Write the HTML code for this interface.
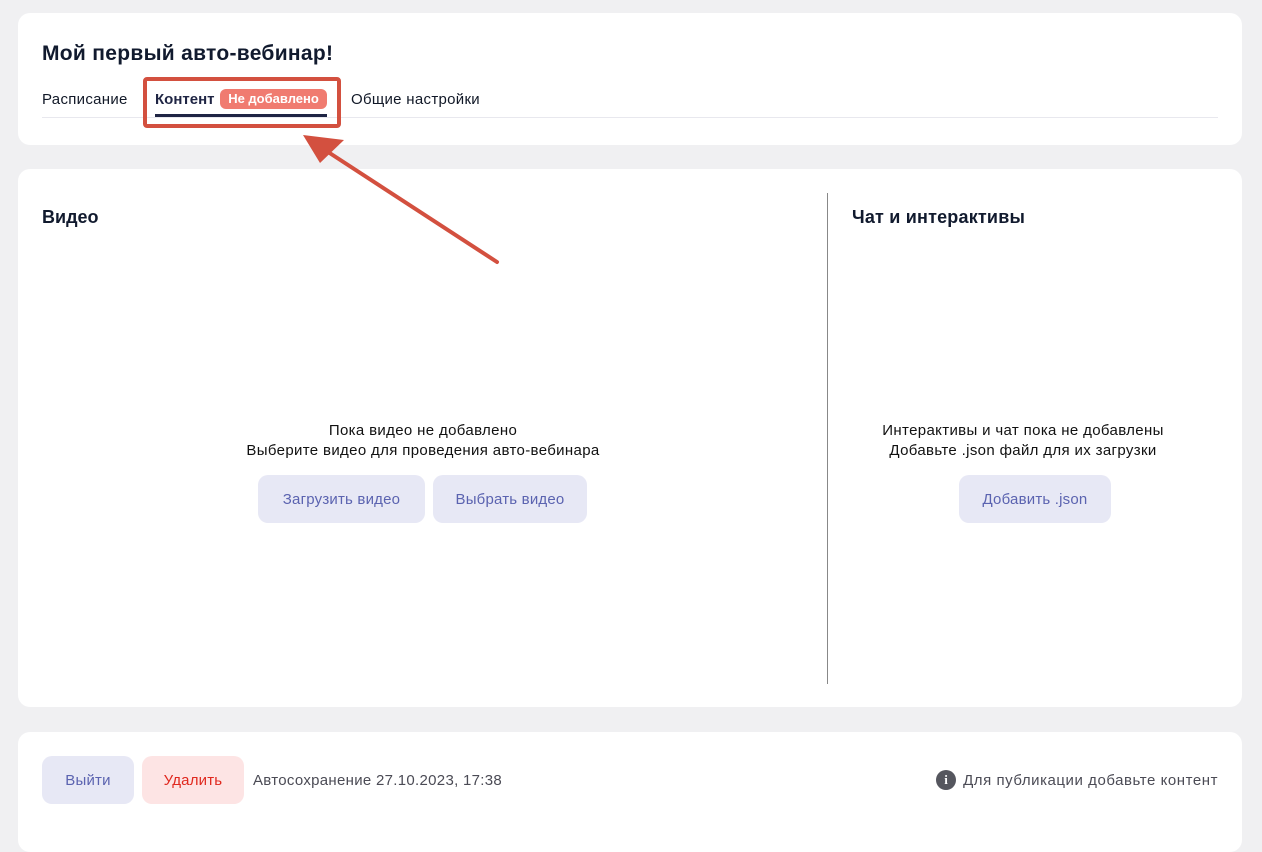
<!DOCTYPE html>
<html><head><meta charset="utf-8">
<style>
*{box-sizing:border-box;margin:0;padding:0}
body{width:1262px;height:822px;background:#f0f0f2;font-family:"Liberation Sans",sans-serif;color:#111827;position:relative;overflow:hidden}
.card{position:absolute;left:18px;width:1224px;background:#fff;border-radius:12px}
.abs{position:absolute}
.btn{position:absolute;border-radius:10px;background:#e7e8f5;color:#5b63b0;font-size:15px;display:flex;align-items:center;justify-content:center;letter-spacing:0.2px}
.c{text-align:center;font-size:15px;line-height:20px;color:#111;letter-spacing:0.35px;font-weight:500}
.t{font-size:15px;letter-spacing:0.3px}
</style></head><body>
<div class="card" style="top:13px;height:132px">
  <div class="abs" style="left:24px;top:29px;font-size:21px;font-weight:bold;color:#111a2e;letter-spacing:0.3px">Мой первый авто-вебинар!</div>
  <div class="abs t" style="left:24px;top:78px">Расписание</div>
  <div class="abs t" style="left:137px;top:78px;font-weight:bold;color:#1f2544;letter-spacing:0">Контент</div>
  <div class="abs" style="left:202px;top:76px;width:107px;height:20px;background:#f07b70;border-radius:6px;color:#fff;font-size:13px;font-weight:bold;text-align:center;line-height:20px">Не добавлено</div>
  <div class="abs t" style="left:333px;top:78px">Общие настройки</div>
  <div class="abs" style="left:24px;top:104px;width:1176px;height:1px;background:#e8e8ee"></div>
  <div class="abs" style="left:137px;top:101px;width:172px;height:3px;background:#1f2544"></div>
</div>
<div class="card" style="top:169px;height:538px">
  <div class="abs" style="left:24px;top:38px;font-size:18px;font-weight:bold;color:#111a2e">Видео</div>
  <div class="abs" style="left:834px;top:38px;font-size:18px;font-weight:bold;color:#111a2e;letter-spacing:0.2px">Чат и интерактивы</div>
  <div class="abs" style="left:809px;top:24px;width:1px;height:491px;background:#888"></div>
  <div class="abs c" style="left:105px;width:600px;top:252px">Пока видео не добавлено<br>Выберите видео для проведения авто-вебинара</div>
  <div class="btn" style="left:240px;top:306px;width:167px;height:48px">Загрузить видео</div>
  <div class="btn" style="left:415px;top:306px;width:154px;height:48px">Выбрать видео</div>
  <div class="abs c" style="left:755px;width:500px;top:252px">Интерактивы и чат пока не добавлены<br>Добавьте .json файл для их загрузки</div>
  <div class="btn" style="left:941px;top:306px;width:152px;height:48px">Добавить .json</div>
</div>
<div class="card" style="top:732px;height:120px">
  <div class="btn" style="left:24px;top:24px;width:92px;height:48px">Выйти</div>
  <div class="btn" style="left:124px;top:24px;width:102px;height:48px;background:#fde4e4;color:#e0281e">Удалить</div>
  <div class="abs t" style="left:235px;top:40px;color:#4b4b55">Автосохранение 27.10.2023, 17:38</div>
  <div class="abs" style="left:918px;top:38px;width:20px;height:20px;border-radius:50%;background:#55565e;color:#fff;font-size:13px;font-weight:bold;text-align:center;line-height:20px;font-family:'Liberation Serif',serif">i</div>
  <div class="abs t" style="right:24px;top:40px;color:#4b4b55;letter-spacing:0.55px">Для публикации добавьте контент</div>
</div>
<svg class="abs" style="left:0;top:0" width="1262" height="822">
  <rect x="145" y="79" width="194" height="47" fill="none" stroke="#d3503f" stroke-width="4" rx="2"/>
  <line x1="497" y1="262" x2="325" y2="150" stroke="#d3503f" stroke-width="4" stroke-linecap="round"/>
  <polygon points="303,135 344,140 320,163" fill="#d3503f"/>
</svg>
</body></html>
